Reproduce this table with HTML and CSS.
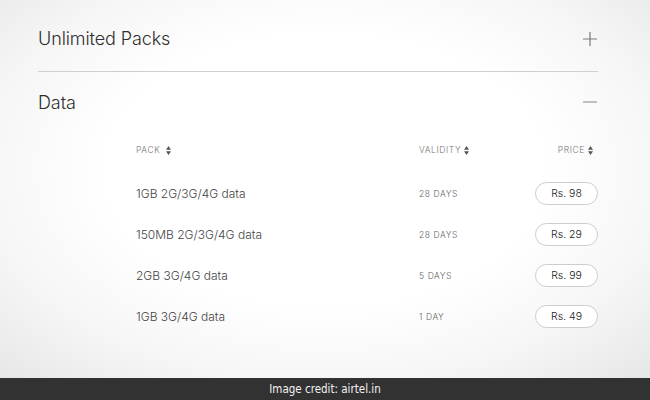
FILE: index.html
```html
<!DOCTYPE html>
<html>
<head>
<meta charset="utf-8">
<link rel="stylesheet" href="styles.css">
</head>
<body>
<div class="page">
  <main class="content">
    <section class="acc acc-closed">
      <h2 class="acc-title">Unlimited Packs</h2>
      <svg class="acc-icon" width="14" height="14" viewBox="0 0 14 14"><path d="M7 0V14M0 7H14" stroke="#7a7a7a" stroke-width="1.2" fill="none"/></svg>
    </section>
    <section class="acc acc-open">
      <h2 class="acc-title">Data</h2>
      <svg class="acc-icon" width="14" height="14" viewBox="0 0 14 14"><path d="M0 7H14" stroke="#9a9a9a" stroke-width="1.2" fill="none"/></svg>
    </section>
    <div class="table">
      <div class="thead">
        <span class="th th-pack">PACK <svg class="sort" width="5" height="9" viewBox="0 0 5 9"><path d="M0 3.8L2.5 0L5 3.8ZM0 5.2H5L2.5 9Z" fill="#555"/></svg></span>
        <span class="th th-validity">VALIDITY <svg class="sort" width="5" height="9" viewBox="0 0 5 9"><path d="M0 3.8L2.5 0L5 3.8ZM0 5.2H5L2.5 9Z" fill="#555"/></svg></span>
        <span class="th th-price">PRICE <svg class="sort" width="5" height="9" viewBox="0 0 5 9"><path d="M0 3.8L2.5 0L5 3.8ZM0 5.2H5L2.5 9Z" fill="#555"/></svg></span>
      </div>
      <div class="row"><span class="pack">1GB 2G/3G/4G data</span><span class="validity">28 DAYS</span><span class="price"><span class="pill">Rs. 98</span></span></div>
      <div class="row"><span class="pack">150MB 2G/3G/4G data</span><span class="validity">28 DAYS</span><span class="price"><span class="pill">Rs. 29</span></span></div>
      <div class="row"><span class="pack">2GB 3G/4G data</span><span class="validity">5 DAYS</span><span class="price"><span class="pill">Rs. 99</span></span></div>
      <div class="row"><span class="pack">1GB 3G/4G data</span><span class="validity">1 DAY</span><span class="price"><span class="pill">Rs. 49</span></span></div>
    </div>
  </main>
  <footer class="credit">Image credit: airtel.in</footer>
</div>
</body>
</html>
```

FILE: styles.css
```css
* { box-sizing: border-box; }
html, body { margin: 0; padding: 0; }
body {
  width: 650px;
  height: 400px;
  overflow: hidden;
  font-family: Inter, "Noto Sans", sans-serif;
  color: #333;
}
.page {
  width: 650px;
  height: 400px;
  display: flex;
  flex-direction: column;
}
.content {
  flex: 1;
  padding: 0 52px 0 38px;
  background: radial-gradient(ellipse 75% 80% at 50% 45%, #ffffff 45%, #f6f6f6 70%, #e4e4e4 100%);
}
.acc {
  display: flex;
  align-items: center;
  justify-content: space-between;
}
.acc-closed {
  height: 72px;
  padding-top: 6px;
  border-bottom: 1px solid #cfcfcf;
}
.acc-open {
  height: 60px;
}
.acc-title {
  margin: 0;
  font-size: 18px;
  font-weight: 300;
  color: #2e2e2e;
  letter-spacing: -0.1px;
}
.acc-icon { margin-right: 1px; }
.table {
  padding-left: 98px;
}
.thead, .row {
  display: grid;
  grid-template-columns: 283px 1fr 80px;
  align-items: center;
}
.thead {
  height: 36px;
  margin-bottom: 5px;
}
.th {
  font-size: 8.5px;
  font-weight: 300;
  color: #777;
  letter-spacing: 0.6px;
  display: flex;
  align-items: center;
  gap: 3px;
}
.th-pack { gap: 6px; }
.th-price { justify-content: flex-end; padding-right: 5px; }
.sort { display: block; }
.row { height: 41px; }
.pack {
  font-size: 12px;
  color: #444;
  font-weight: 300;
}
.validity {
  font-size: 8.5px;
  font-weight: 300;
  color: #666;
  letter-spacing: 0.6px;
}
.price {
  display: flex;
  justify-content: flex-end;
}
.pill {
  width: 63px;
  height: 23px;
  border: 1px solid #cdcdcd;
  border-radius: 12px;
  background: #fff;
  font-size: 10.5px;
  font-weight: 300;
  color: #222;
  display: flex;
  align-items: center;
  justify-content: center;
}
.credit {
  height: 22px;
  background: #323232;
  color: #f2f2f2;
  font-family: "DejaVu Sans Condensed", "Liberation Sans Narrow", "DejaVu Sans", sans-serif;
  font-stretch: condensed;
  font-size: 11.5px;
  display: flex;
  align-items: center;
  justify-content: center;
}
```
